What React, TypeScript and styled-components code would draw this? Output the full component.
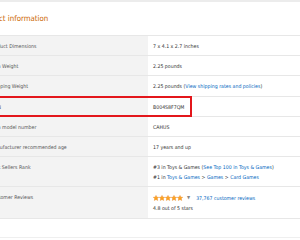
import React from 'react';
import styled, { createGlobalStyle } from 'styled-components';

const GlobalStyle = createGlobalStyle`
  html, body {
    margin: 0;
    padding: 0;
    background: #fff;
  }
  body {
    font-family: "DejaVu Sans Condensed", "Liberation Sans", sans-serif;
  }
`;

const Page = styled.div`
  width: 300px;
  height: 240px;
  overflow: hidden;
  border-top: 2px solid #ececec;
  box-sizing: border-box;
`;

const Section = styled.div`
  margin-left: -21px;
`;

const Heading = styled.h2`
  margin: 0;
  height: 33px;
  display: flex;
  align-items: center;
  font-size: 7.8px;
  font-weight: 400;
  color: #cc6600;
`;

const Table = styled.div`
  border-top: 1px solid #e7e7e7;
  font-size: 5.2px;
  line-height: 10px;
`;

const Row = styled.div`
  position: relative;
  display: grid;
  grid-template-columns: 169px 1fr;
  border-bottom: 1px solid #e7e7e7;
`;

const Label = styled.div`
  background: #f3f3f3;
  color: #555;
  padding: 5px 0 4.2px 11px;
  white-space: nowrap;
`;

const Value = styled.div`
  color: #333;
  padding: 5px 5px 4.2px;
  white-space: nowrap;
`;

const Link = styled.span`
  color: #0066c0;
`;

const Highlight = styled.div`
  position: absolute;
  left: 0;
  top: -1px;
  bottom: -1px;
  width: 213px;
  border: 2px solid #e3161b;
  box-sizing: border-box;
  pointer-events: none;
`;

const Stars = styled.div`
  display: flex;
  align-items: center;
  height: 11px;
`;

const Caret = styled.span`
  color: #888;
  font-size: 4.5px;
  margin: 0 6px 0 4px;
`;

const Filler = styled.div`
  height: 18px;
  border-bottom: 1px solid #efefef;
`;

const Star = () => (
  <svg width="6" height="6" viewBox="0 0 24 24">
    <path
      d="M12 1.5l3.2 7 7.6.8-5.7 5.1 1.6 7.5L12 18l-6.7 3.9 1.6-7.5L1.2 9.3l7.6-.8z"
      fill="#ffa41c"
      stroke="#e47911"
      strokeWidth="1.5"
    />
  </svg>
);

const rows: { label: string; value: React.ReactNode; mark?: boolean }[] = [
  { label: 'Product Dimensions', value: '7 x 4.1 x 2.7 inches' },
  { label: 'Item Weight', value: '2.25 pounds' },
  {
    label: 'Shipping Weight',
    value: (
      <>
        2.25 pounds (<Link>View shipping rates and policies</Link>)
      </>
    ),
  },
  { label: 'ASIN', value: 'B004S8F7QM', mark: true },
  { label: 'Item model number', value: 'CAHUS' },
  { label: 'Manufacturer recommended age', value: '17 years and up' },
  {
    label: 'Best Sellers Rank',
    value: (
      <>
        <div>
          #3 in Toys &amp; Games (<Link>See Top 100 in Toys &amp; Games</Link>)
        </div>
        <div>
          #1 in <Link>Toys &amp; Games</Link> &gt; <Link>Games</Link> &gt; <Link>Card Games</Link>
        </div>
      </>
    ),
  },
  {
    label: 'Customer Reviews',
    value: (
      <>
        <Stars>
          <Star />
          <Star />
          <Star />
          <Star />
          <Star />
          <Caret>▼</Caret>
          <Link>37,767 customer reviews</Link>
        </Stars>
        <div>4.8 out of 5 stars</div>
      </>
    ),
  },
];

export default function App() {
  return (
    <>
      <GlobalStyle />
      <Page>
        <Section>
          <Heading>Product information</Heading>
          <Table>
            {rows.map((r) => (
              <Row key={r.label}>
                <Label>{r.label}</Label>
                <Value>{r.value}</Value>
                {r.mark && <Highlight />}
              </Row>
            ))}
          </Table>
          <Filler />
        </Section>
      </Page>
    </>
  );
}
